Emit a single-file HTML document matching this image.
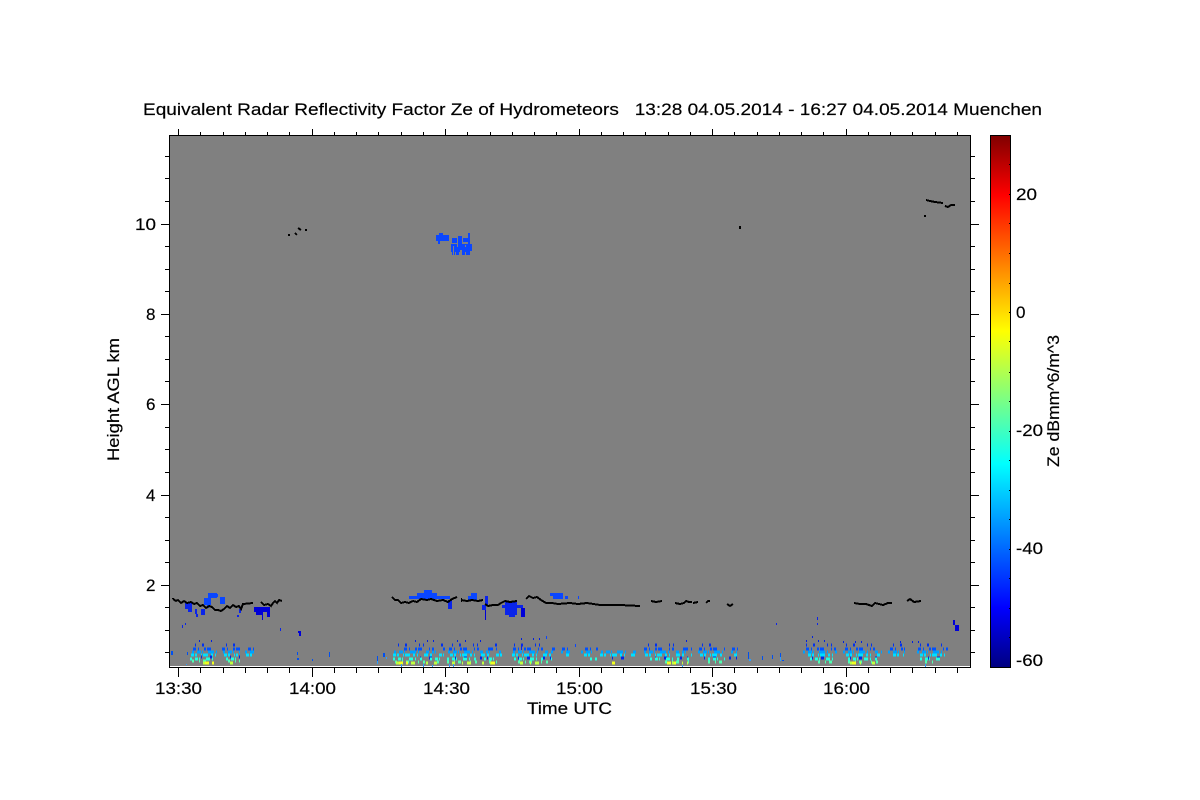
<!DOCTYPE html>
<html><head><meta charset="utf-8"><title>Radar Reflectivity</title>
<style>html,body{margin:0;padding:0;background:#fff}svg{display:block}text{font-family:"Liberation Sans",sans-serif;fill:#000;stroke:#000;stroke-width:.18px}</style></head>
<body>
<svg width="1200" height="800" viewBox="0 0 1200 800" xmlns="http://www.w3.org/2000/svg">
<defs>
<linearGradient id="jet" x1="0" y1="0" x2="0" y2="1">
<stop offset="0" stop-color="#7f0000"/>
<stop offset=".113" stop-color="#ff0000"/>
<stop offset=".368" stop-color="#ffff00"/>
<stop offset=".617" stop-color="#00ffff"/>
<stop offset=".887" stop-color="#0000ff"/>
<stop offset="1" stop-color="#00007f"/>
</linearGradient>
</defs>
<rect width="1200" height="800" fill="#fff"/>
<g shape-rendering="crispEdges">
<rect x="169" y="135" width="802" height="533" fill="#808080"/>
<rect x="170" y="666" width="800" height="1" fill="#fff"/>
<rect x="990" y="135" width="21" height="533" fill="url(#jet)"/>

<g fill="none" stroke-width="3">
<!-- sparse top rows -->
<path stroke="#0020e0" stroke-width="2" stroke-dasharray="1 11 1 5 1 23 1 7 1 14 1 31 1 9 1 17" d="M199 641H215M415 641H500M521 639H555M686 641H690M806 641H835M812 637H820M843 642H880M900 642H935"/>
<path stroke="#0030f0" stroke-dasharray="1 6 2 12 1 3 1 17 2 8 1 25 1 4 2 11" d="M195 645H216M226 645H240M398 645H445M452 645H503M514 645H555M648 645H690M702 645H722M806 645H838M846 645H880M893 645H903M920 645H945"/>
<path stroke="#0050ff" stroke-dasharray="3 2 1 5 2 1 4 7 1 2 2 9 5 3 1 11 2 4" d="M193 649H217M222 649H240M248 649H255M404 649H445M449 649H503M513 649H555M562 649H568M585 649H598M644 649H692M699 649H725M732 649H738M806 649H836M845 649H882M890 649H905M918 649H950"/>
<path stroke="#00a0ff" stroke-dasharray="2 3 4 1 1 5 6 2 1 7 3 3 2 1 1 9" d="M192 652H217M223 652H240M245 652H255M394 652H445M448 652H503M513 652H554M561 652H570M581 652H597M601 652H636M644 652H693M698 652H725M731 652H737M803 652H837M843 652H882M888 652H905M917 652H948"/>
<path stroke="#00e0ff" stroke-dasharray="3 1 2 4 1 1 5 3 2 2 1 6 4 2 2 7" d="M191 655H216M224 655H238M246 655H254M393 655H444M450 655H502M512 655H553M566 655H569M584 655H594M600 655H637M645 655H692M700 655H724M734 655H738M808 655H835M846 655H880M893 655H904M920 655H946"/>
<path stroke="#0028e8" stroke-dasharray="1 8 3 13 2 5 1 19 4 10" d="M201 657H212M230 657H240M420 658H445M455 658H503M518 658H552M612 658H636M655 658H692M704 658H738M812 658H836M850 658H880M928 658H950"/>
<path stroke="#20ffe0" stroke-dasharray="2 3 3 1 1 6 4 2 1 4 2 8" d="M190 659H216M226 659H241M393 659H444M447 659H500M514 659H552M590 659H597M650 659H691M708 659H725M810 659H834M848 659H880M920 659H940"/>
<path stroke="#50ffb0" stroke-dasharray="2 5 1 3 3 9 1 4 2 12" d="M192 661H213M228 661H240M395 662H440M447 662H498M518 662H550M665 662H690M708 662H722M818 662H832M848 662H878M925 662H935"/>
<path stroke="#c0ff40" stroke-dasharray="3 7 1 4 4 11 2 6" d="M203 663H214M230 663H240M396 663H438M452 663H492M520 663H545M672 663H688M850 663H862M872 663H880"/>
<path stroke="#f0ff20" stroke-dasharray="4 3 2 9" d="M205 663H214M399 663H410M491 663H496M612 663H615M667 663H676M852 663H856"/>
</g>
<path fill="#0050f0" d="M171 651h2v4h-2zM187 652h1v3h-1zM297 652h1v3h-1zM297 658h2v2h-2zM312 659h1v2h-1zM329 652h1v5h-1zM377 656h1v5h-1zM383 653h2v4h-2zM748 652h1v7h-1zM762 656h1v4h-1zM772 655h1v4h-1zM780 653h1v6h-1zM782 660h2v1h-2z"/>
<path fill="#2aa0ff" d="M377 661h1v3h-1zM386 657h1v2h-1zM749 659h2v2h-2zM780 657h1v4h-1zM423 664h1v4h-1zM401 664h1v3h-1zM432 665h1v3h-1zM453 664h1v3h-1zM449 664h1v3h-1zM682 665h1v3h-1zM925 664h1v3h-1zM186 664h1v1h-1z"/>

<path fill="#0a46ff" d="M436 235h13v6h-13zM439 233h4v2h-4zM438 241h2v3h-2zM452 238h5v5h-5zM458 236h4v8h-4zM463 238h5v4h-5zM468 233h2v11h-2zM451 244h21v8h-21zM452 252h3v3h-3zM456 252h3v3h-3zM462 252h3v3h-3zM466 252h4v3h-4z"/>
<path fill="#808080" d="M453 246h1v9h-1zM460 250h2v5h-2zM457 244h1v3h-1zM465 245h1v2h-1zM470 251h2v1h-2z"/>
<path fill="#0a46ff" d="M208 593h9v5h-9zM211 590h0v0zM204 598h7v7h-7zM212 596h4v2h-4zM220 597h5v7h-5zM207 605h2v3h-2zM213 594h5v3h-5zM417 593h20v3h-20zM424 590h8v3h-8zM409 596h41v3h-41zM471 593h6v3h-6zM468 596h9v4h-9zM550 593h13v3h-13zM553 596h10v3h-10zM565 596h3v3h-3zM578 596h1v3h-1zM546 636h1v3h-1zM575 644h1v3h-1z"/>
<path fill="#0a24ea" d="M185 603h7v6h-7zM188 609h4v3h-4zM201 609h4v6h-4zM195 609h2v5h-2zM196 614h2v3h-2zM239 609h2v4h-2zM237 615h2v2h-2zM448 600h4v9h-4zM485 596h3v9h-3zM482 605h4v5h-4zM502 605h21v3h-21zM505 602h12v13h-12zM509 615h6v2h-6zM499 603h1v2h-1zM513 614h2v3h-2zM182 625h1v3h-1zM185 623h1v2h-1zM280 628h1v3h-1zM776 623h1v2h-1zM817 617h1v3h-1zM817 623h1v2h-1zM521 644h1v6h-1z"/>
<path fill="#0000d8" d="M254 607h16v5h-16zM256 612h7v3h-7zM267 612h3v5h-3zM262 615h1v5h-1zM485 610h1v10h-1zM521 608h4v9h-4zM299 631h2v5h-2zM298 631h1v2h-1zM953 620h2v5h-2zM955 625h4v6h-4z"/>

<g fill="none" stroke="#000" stroke-width="2">
<path d="M173 599L176 601L178 600L181 603L184 601L187 603L191 602L194 604L197 603L200 606L203 605L206 608L209 606L212 607L215 610L218 610L221 611L224 609L227 606L230 608L233 605L236 607L239 606L241 609L243 604L253 603M261 602L264 605L268 604L271 606L273 603L275 601L277 603L279 600L282 601"/>
<path d="M392 597L395 600L398 600L401 603L405 602L409 603L413 601L417 602L421 599L427 600L431 599L437 601L443 600L448 602L452 599L457 597M461 600L467 601L472 600L478 601L483 600M485 604L488 606L493 605L498 605L501 603L505 601L510 602L517 601M526 599L529 596L533 598L537 597L541 600L546 603L552 603L558 604L570 603L578 604L587 603L600 605L620 605L640 606M651 601L656 602L662 601"/>
<path d="M675 603L680 604L684 603L686 601L689 602L692 602M693 603L698 602M706 603L708 601L710 601M727 604L730 606L733 604M854 603L860 604L866 604L872 606L875 603L879 604L883 605L888 603L892 603M907 601L910 599L914 602L921 601"/>
<path d="M926 200L930 201L935 202L943 203M945 206L948 207L951 205L955 205"/>
<path d="M288 235h2M295 233l2 2M298 228l3 2M305 230h2"/>
</g>
<path fill="#000" d="M924 215h2v2h-2zM739 226h2v3h-2zM461 598h1v4h-1zM172 598h2v1h-2z"/>

<g fill="none" stroke="#000" stroke-width="1">
<path d="M169.5 135.5H970.5V667.5H169.5Z"/>
<path d="M990.5 135.5H1010.5V667.5H990.5Z"/>
<path d="M178.5 129V135M312.5 129V135M445.5 129V135M579.5 129V135M712.5 129V135M846.5 129V135M200.5 132V135M223.5 132V135M245.5 132V135M267.5 132V135M289.5 132V135M334.5 132V135M356.5 132V135M378.5 132V135M401.5 132V135M423.5 132V135M467.5 132V135M490.5 132V135M512.5 132V135M534.5 132V135M556.5 132V135M601.5 132V135M623.5 132V135M645.5 132V135M668.5 132V135M690.5 132V135M734.5 132V135M757.5 132V135M779.5 132V135M801.5 132V135M823.5 132V135M868.5 132V135M890.5 132V135M912.5 132V135M935.5 132V135M957.5 132V135"/>
<path d="M178.5 668V677M312.5 668V677M445.5 668V677M579.5 668V677M712.5 668V677M846.5 668V677M200.5 668V673M223.5 668V673M245.5 668V673M267.5 668V673M289.5 668V673M334.5 668V673M356.5 668V673M378.5 668V673M401.5 668V673M423.5 668V673M467.5 668V673M490.5 668V673M512.5 668V673M534.5 668V673M556.5 668V673M601.5 668V673M623.5 668V673M645.5 668V673M668.5 668V673M690.5 668V673M734.5 668V673M757.5 668V673M779.5 668V673M801.5 668V673M823.5 668V673M868.5 668V673M890.5 668V673M912.5 668V673M935.5 668V673M957.5 668V673"/>
<path d="M161 224.5H169M161 314.5H169M161 404.5H169M161 495.5H169M161 585.5H169M165 652.5H169M165 630.5H169M165 607.5H169M165 562.5H169M165 540.5H169M165 517.5H169M165 472.5H169M165 449.5H169M165 427.5H169M165 381.5H169M165 359.5H169M165 336.5H169M165 291.5H169M165 269.5H169M165 246.5H169M165 201.5H169M165 178.5H169M165 156.5H169"/>
<path d="M971 224.5H979M971 314.5H979M971 404.5H979M971 495.5H979M971 585.5H979M971 652.5H975M971 630.5H975M971 607.5H975M971 562.5H975M971 540.5H975M971 517.5H975M971 472.5H975M971 449.5H975M971 427.5H975M971 381.5H975M971 359.5H975M971 336.5H975M971 291.5H975M971 269.5H975M971 246.5H975M971 201.5H975M971 178.5H975M971 156.5H975"/>
<path d="M1009 164.5H1011M1009 194.5H1011M1009 223.5H1011M1009 253.5H1011M1009 283.5H1011M1009 312.5H1011M1009 341.5H1011M1009 372.5H1011M1009 401.5H1011M1009 431.5H1011M1009 460.5H1011M1009 490.5H1011M1009 519.5H1011M1009 549.5H1011M1009 578.5H1011M1009 608.5H1011M1009 637.5H1011"/>
</g>
</g>

<g font-size="17">
<text x="143" y="115" textLength="899" lengthAdjust="spacingAndGlyphs" xml:space="preserve">Equivalent Radar Reflectivity Factor Ze of Hydrometeors   13:28 04.05.2014 - 16:27 04.05.2014 Muenchen</text>
<text x="155" y="694" textLength="47" lengthAdjust="spacingAndGlyphs">13:30</text>
<text x="289" y="694" textLength="47" lengthAdjust="spacingAndGlyphs">14:00</text>
<text x="423" y="694" textLength="47" lengthAdjust="spacingAndGlyphs">14:30</text>
<text x="556" y="694" textLength="47" lengthAdjust="spacingAndGlyphs">15:00</text>
<text x="690" y="694" textLength="47" lengthAdjust="spacingAndGlyphs">15:30</text>
<text x="823" y="694" textLength="47" lengthAdjust="spacingAndGlyphs">16:00</text>
<text x="527" y="714" textLength="85" lengthAdjust="spacingAndGlyphs">Time UTC</text>
<text x="135" y="230" textLength="21" lengthAdjust="spacingAndGlyphs">10</text>
<text x="146" y="320">8</text>
<text x="146" y="410">6</text>
<text x="146" y="501">4</text>
<text x="146" y="591">2</text>
<text transform="translate(119 461) rotate(-90)" textLength="123" lengthAdjust="spacingAndGlyphs">Height AGL km</text>
<text x="1016" y="200" textLength="21" lengthAdjust="spacingAndGlyphs">20</text>
<text x="1016" y="318">0</text>
<text x="1016" y="436" textLength="27" lengthAdjust="spacingAndGlyphs">-20</text>
<text x="1016" y="554" textLength="27" lengthAdjust="spacingAndGlyphs">-40</text>
<text x="1016" y="666" textLength="27" lengthAdjust="spacingAndGlyphs">-60</text>
<text transform="translate(1059 467) rotate(-90)" textLength="132" lengthAdjust="spacingAndGlyphs">Ze dBmm^6/m^3</text>
</g>
</svg>
</body></html>
